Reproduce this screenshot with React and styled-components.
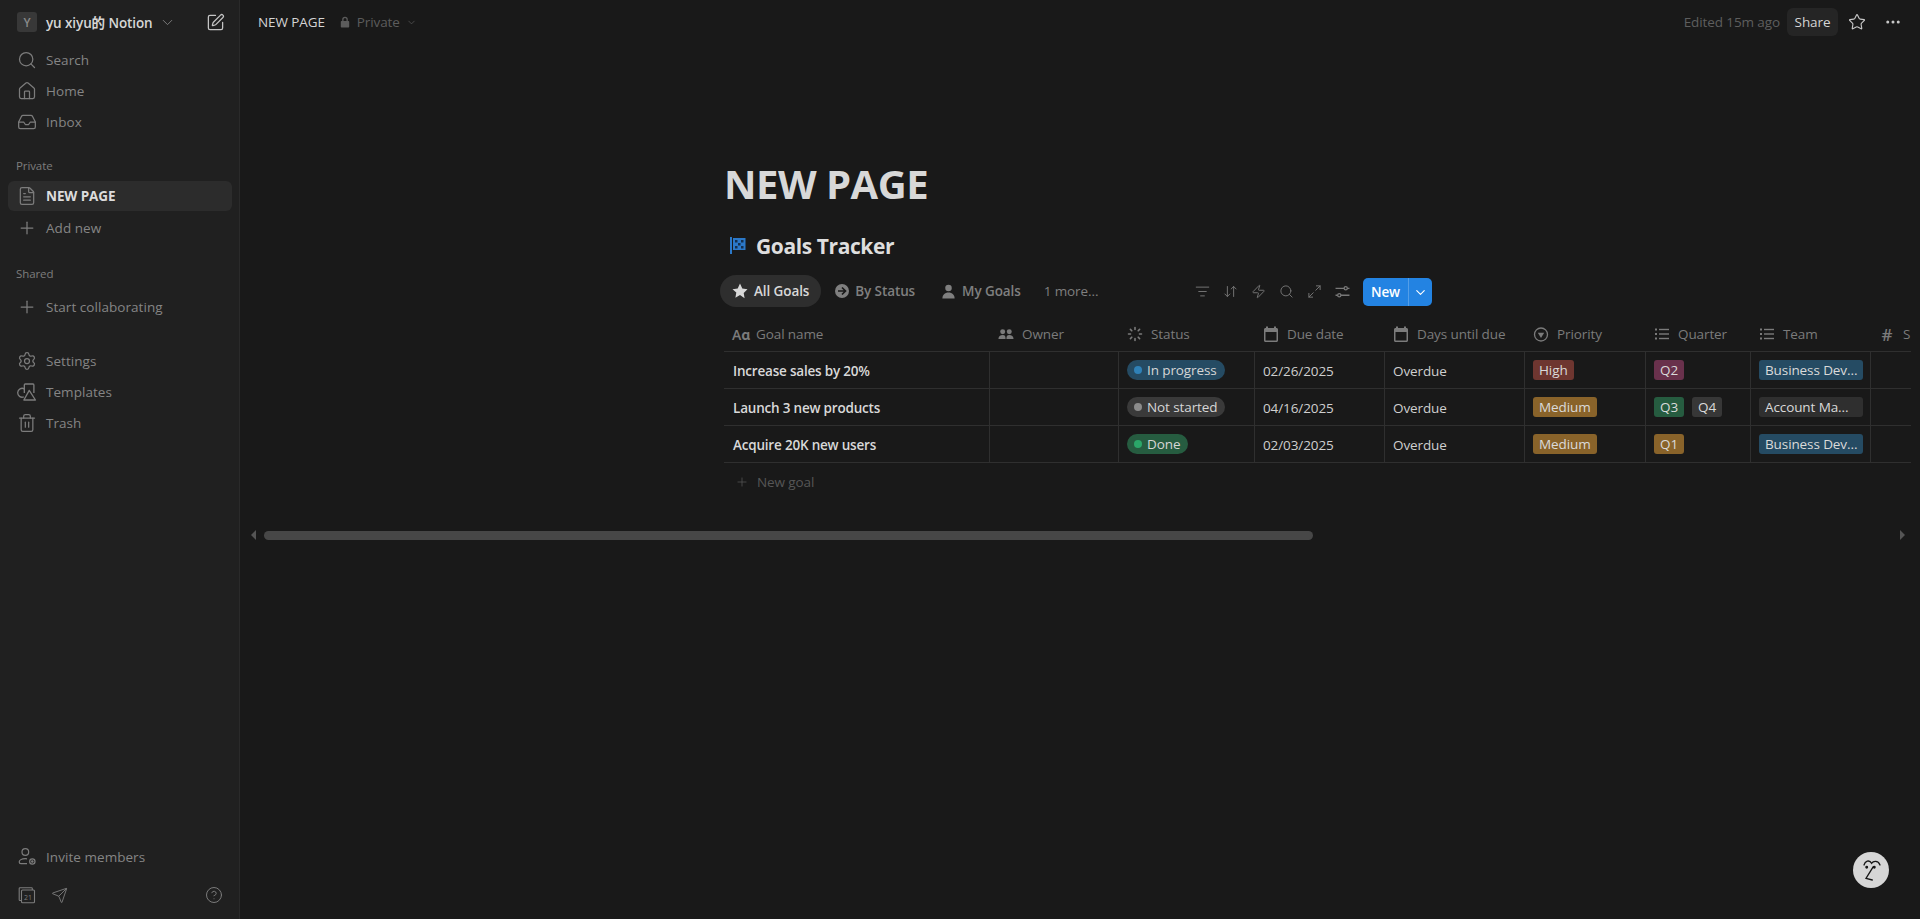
import React from 'react';
import styled, { createGlobalStyle } from 'styled-components';
import {
  Search, Home, Inbox, FileText, Plus, Settings, Trash2, SquarePen, ChevronDown,
  Star, CircleHelp, Send, ListFilter, ArrowDownUp, Zap, Maximize2, Ellipsis,
} from 'lucide-react';

const GlobalStyle = createGlobalStyle`
  html, body { margin: 0; height: 100%; background: #191919; }
  body {
    font-family: "Open Sans", "Noto Sans CJK SC", sans-serif;
    font-size: 13.5px;
    letter-spacing: -0.1px;
    overflow: hidden;
  }
`;

const Layout = styled.div`
  display: flex;
  height: 919px;
  position: relative;
`;

const Sidebar = styled.aside`
  width: 240px;
  flex: none;
  box-sizing: border-box;
  display: flex;
  flex-direction: column;
  padding: 0 7px 9px 8px;
  background: #202020;
  border-right: 1px solid #2a2a2a;
`;

const Workspace = styled.div`
  height: 44px;
  margin-bottom: 1px;
  padding: 0 8px 0 9px;
  display: flex;
  align-items: center;
  color: #d6d6d6;
  font-weight: 600;
`;

const Avatar = styled.span`
  width: 20px;
  height: 20px;
  margin-right: 9px;
  border-radius: 3px;
  background: #383838;
  color: #8a8a8a;
  font-size: 12px;
  display: flex;
  align-items: center;
  justify-content: center;
`;

const WorkspaceCaret = styled(ChevronDown)`
  margin-left: 6px;
  color: #7f7f7f;
`;

const ComposeIcon = styled(SquarePen)`
  margin-left: auto;
  margin-right: -1px;
  color: #c4c4c4;
`;

const NavRow = styled.div`
  height: 30px;
  flex: none;
  box-sizing: border-box;
  width: 224px;
  margin-bottom: ${({ $gap }) => $gap ?? 1}px;
  padding-left: 9px;
  display: flex;
  align-items: center;
  gap: 9px;
  border-radius: 6px;
  letter-spacing: ${({ $active }) => ($active ? '-0.1px' : '0.05px')};
  font-weight: ${({ $active }) => ($active ? 700 : 500)};
  color: ${({ $active }) => ($active ? '#dcdcdc' : '#858585')};
  background: ${({ $active }) => ($active ? '#2c2c2c' : 'transparent')};
  svg { flex: none; color: #7c7c7c; }
`;

const SectionLabel = styled.div`
  height: 20px;
  margin: ${({ $top }) => $top}px 0 ${({ $bottom }) => $bottom}px;
  padding-left: 8px;
  display: flex;
  align-items: center;
  font-size: 11.5px;
  font-weight: 500;
  color: #7d7d7d;
`;

const BottomGroup = styled.div`
  margin-top: 23px;
`;

const SidebarFooter = styled.div`
  margin-top: auto;
`;

const FooterIcons = styled.div`
  height: 30px;
  margin-top: 8px;
  padding: 0 10px;
  display: flex;
  align-items: center;
  gap: 15px;
  color: #7c7c7c;
`;

const HelpIcon = styled(CircleHelp)`
  margin-left: auto;
  margin-right: -1px;
`;

const Main = styled.main`
  flex: 1;
  min-width: 0;
  display: flex;
  flex-direction: column;
  background: #191919;
`;

const Topbar = styled.header`
  height: 44px;
  flex: none;
  padding: 0 18px;
  display: flex;
  align-items: center;
`;

const Crumb = styled.span`
  color: #d4d4d4;
  margin-right: 14px;
`;

const PrivacyTag = styled.span`
  display: flex;
  align-items: center;
  gap: 6px;
  color: #5c5c5c;
`;

const TopActions = styled.div`
  margin-left: auto;
  display: flex;
  align-items: center;
`;

const EditedText = styled.span`
  color: #5e5e5e;
  margin-right: 7px;
`;

const ShareButton = styled.button`
  width: 51px;
  height: 28px;
  padding: 0;
  border: 0;
  border-radius: 6px;
  background: #252525;
  color: #d4d4d4;
  font: inherit;
  letter-spacing: inherit;
`;

const StarButton = styled(Star)`
  margin: 0 18px 0 10px;
  color: #c8c8c8;
`;

const DotsIcon = styled(Ellipsis)`
  color: #c8c8c8;
`;

const Page = styled.section`
  padding: 116px 9px 0 484px;
`;

const Title = styled.h1`
  margin: 0 0 23px;
  font-size: 40px;
  line-height: 48px;
  font-weight: 700;
  letter-spacing: -0.5px;
  color: #d8d8d8;
`;

const DatabaseName = styled.div`
  height: 30px;
  padding-left: 6px;
  display: flex;
  align-items: center;
  gap: 10px;
  font-size: 21px;
  font-weight: 700;
  letter-spacing: -0.4px;
  color: #dedede;
`;

const ViewBar = styled.div`
  width: 712px;
  height: 32px;
  margin: 14px 0 0 -4px;
  display: flex;
  align-items: center;
`;

const ViewTab = styled.div`
  height: 32px;
  margin-right: 2px;
  padding: 0 12px;
  display: flex;
  align-items: center;
  gap: 6px;
  border-radius: 16px;
  font-weight: 600;
  color: ${({ $active }) => ($active ? '#d8d8d8' : '#7f7f7f')};
  background: ${({ $active }) => ($active ? '#2e2e2e' : 'transparent')};
`;

const MoreViews = styled.span`
  margin-left: 9px;
  color: #7f7f7f;
`;

const ToolIcons = styled.div`
  margin-left: auto;
  display: flex;
  align-items: center;
  gap: 13px;
  color: #787878;
`;

const NewSplit = styled.div`
  width: 69px;
  height: 28px;
  margin: 2px 0 0 13px;
  display: flex;
  border-radius: 5px;
  overflow: hidden;
  background: #2383e2;
  color: #fff;
  font-weight: 600;
`;

const NewLabel = styled.span`
  width: 45px;
  display: flex;
  align-items: center;
  justify-content: center;
  border-right: 1px solid rgba(255, 255, 255, 0.22);
`;

const NewCaret = styled.span`
  flex: 1;
  display: flex;
  align-items: center;
  justify-content: center;
`;

const TableClip = styled.div`
  margin-top: 10px;
  overflow: hidden;
`;

const columns = '266px 129px 136px 130px 140px 121px 105px 120px 200px';

const HeaderRow = styled.div`
  display: grid;
  grid-template-columns: ${columns};
  height: 35px;
  box-sizing: border-box;
  border-bottom: 1px solid #2f2f2f;
`;

const HeaderCell = styled.div`
  padding-left: 8px;
  display: flex;
  align-items: center;
  gap: 8px;
  color: #7b7b7b;
  svg { flex: none; }
`;

const TypeGlyph = styled.span`
  width: 16px;
  flex: none;
  font-size: ${({ $big }) => ($big ? 17 : 14)}px;
  font-weight: 600;
  text-align: center;
  color: #7b7b7b;
`;

const Row = styled.div`
  display: grid;
  grid-template-columns: ${columns};
  height: 37px;
  box-sizing: border-box;
  border-bottom: 1px solid #2f2f2f;
`;

const Cell = styled.div`
  padding: 2px 0 0 8px;
  display: flex;
  align-items: center;
  gap: 8px;
  box-sizing: border-box;
  color: #cfcfcf;
  border-right: ${({ $last }) => ($last ? 0 : '1px solid #2f2f2f')};
`;

const GoalName = styled.span`
  padding-left: 1px;
  font-weight: 600;
  letter-spacing: -0.2px;
  color: #d8d8d8;
`;

const StatusPill = styled.span`
  height: 20px;
  margin-top: -2px;
  padding: 0 8px 0 7px;
  display: flex;
  align-items: center;
  gap: 5px;
  border-radius: 10px;
  color: #d6d6d6;
  background: ${({ $bg }) => $bg};
`;

const StatusDot = styled.i`
  width: 8px;
  height: 8px;
  border-radius: 50%;
  background: ${({ $color }) => $color};
`;

const Tag = styled.span`
  height: 20px;
  margin-top: -2px;
  box-sizing: border-box;
  width: ${({ $width }) => ($width ? `${$width}px` : 'auto')};
  padding: 0 6px;
  display: flex;
  align-items: center;
  white-space: nowrap;
  border-radius: 3px;
  color: #dadada;
  background: ${({ $bg }) => $bg};
`;

const NewRow = styled.div`
  height: 37px;
  padding-left: 11px;
  display: flex;
  align-items: center;
  gap: 8px;
  color: #565656;
`;

const ScrollRow = styled.div`
  height: 10px;
  margin-top: 30px;
  padding: 0 15px 0 11px;
  display: flex;
  align-items: center;
`;

const ScrollThumb = styled.div`
  width: 1049px;
  height: 9px;
  margin-left: 8px;
  border-radius: 5px;
  background: #474747;
`;

const Arrow = styled.i`
  width: 0;
  height: 0;
  border: 5px solid transparent;
  border-left-width: ${({ $right }) => ($right ? 5 : 0)}px;
  border-right-width: ${({ $right }) => ($right ? 0 : 5)}px;
  border-left-color: ${({ $right }) => ($right ? '#555' : 'transparent')};
  border-right-color: ${({ $right }) => ($right ? 'transparent' : '#555')};
  margin-left: ${({ $right }) => ($right ? 'auto' : 0)};
`;

const HelpBubble = styled.div`
  position: absolute;
  right: 31px;
  bottom: 31px;
  width: 36px;
  height: 36px;
  border-radius: 50%;
  background: #d6d6d6;
  display: flex;
  align-items: center;
  justify-content: center;
`;

const FilledIcon = ({ size = 16, children, box = 16 }) => (
  <svg width={size} height={size} viewBox={`0 0 ${box} ${box}`} fill="currentColor">{children}</svg>
);

const LockIcon = () => (
  <FilledIcon size={12} box={12}>
    <path d="M3.2 5V3.6a2.8 2.8 0 0 1 5.6 0V5h.4c.6 0 1 .4 1 1v4.4c0 .6-.4 1-1 1H2.8c-.6 0-1-.4-1-1V6c0-.6.4-1 1-1h.4zm1.3 0h3V3.6a1.5 1.5 0 0 0-3 0V5z" />
  </FilledIcon>
);

const TemplatesIcon = () => (
  <svg width="20" height="20" viewBox="0 0 18 18" fill="none" stroke="currentColor" strokeWidth="1.2" strokeLinejoin="round">
    <path d="M6.6 6.2a4 4 0 1 0-.5 7.2" />
    <path d="M6.6 9.8V2.6c0-.5.3-.8.8-.8h7c.5 0 .8.3.8.8v7.2" />
    <path d="M11 7.6l5.6 8.6H6.2L11 7.6z" />
  </svg>
);

const InviteIcon = () => (
  <svg width="20" height="20" viewBox="0 0 18 18" fill="none" stroke="currentColor" strokeWidth="1.1">
    <circle cx="7.5" cy="4.5" r="3" />
    <path d="M9 10.6c-.5-.1-1-.1-1.500-.1-3.500 0-5.500 1.400-5.500 3 0 .9.600 1.500 1.500 1.500H9" />
    <circle cx="13.800" cy="13" r="2.400" />
    <circle cx="13.800" cy="13" r=".6" fill="currentColor" />
  </svg>
);

const CalendarAppIcon = () => (
  <svg width="18" height="18" viewBox="0 0 18 18" fill="none" stroke="currentColor" strokeWidth="1.1">
    <path d="M3.500 14.500H2c-.5 0-.8-.3-.8-.8V2.500c0-.5.3-.8.8-.8h11.500c.5 0 .8.3.8.8V4" />
    <rect x="3.500" y="4" width="13" height="12.800" rx="1" />
    <text x="10" y="14" fontSize="7" textAnchor="middle" fill="currentColor" stroke="none">21</text>
  </svg>
);

const FlagIcon = () => (
  <svg width="16" height="18" viewBox="0 0 16 18">
    <rect x="0" y="0" width="2" height="17" fill="#2b78c8" />
    <rect x="3" y="1" width="12.500" height="12" fill="#2b78c8" />
    <g fill="#142f4e">
      <rect x="5" y="3" width="2.500" height="2.500" />
      <rect x="11" y="3" width="2.500" height="2.500" />
      <rect x="8" y="6" width="2.500" height="2.500" />
      <rect x="5" y="9" width="2.500" height="2.500" />
      <rect x="11" y="9" width="2.500" height="2.500" />
    </g>
  </svg>
);

const StarFilled = () => (
  <FilledIcon>
    <path d="M8 .6l2.300 4.900 5.200.7-3.800 3.700.9 5.300L8 12.100l-4.600 2.600.9-5.300L.5 6.200l5.200-.7z" />
  </FilledIcon>
);

const CircleArrow = () => (
  <svg width="14" height="14" viewBox="0 0 14 14">
    <circle cx="7" cy="7" r="7" fill="currentColor" />
    <path d="M3 7h7M7 3.500L10.500 7 7 10.500" fill="none" stroke="#191919" strokeWidth="1.700" />
  </svg>
);

const PersonIcon = () => (
  <FilledIcon size={15}>
    <circle cx="8" cy="4.200" r="3.500" />
    <path d="M1.500 15.500c0-4 2.500-6.500 6.500-6.500s6.500 2.500 6.500 6.500z" />
  </FilledIcon>
);

const PeopleIcon = () => (
  <svg width="16" height="13" viewBox="0 0 18 14" fill="currentColor">
    <circle cx="5.300" cy="4" r="2.800" />
    <circle cx="12.700" cy="4" r="2.800" />
    <path d="M.5 12c0-3 2-4.500 4.800-4.500S8.500 9 8.500 12zM9.500 12c0-3 .5-4.500 3.200-4.500S17.500 9 17.500 12z" />
  </svg>
);

const SpinnerIcon = () => (
  <svg width="16" height="16" viewBox="0 0 16 16" stroke="currentColor" strokeWidth="1.600" strokeLinecap="round">
    <path d="M8 1.500v2M8 12.500v2M1.500 8h2M12.500 8h2M3.400 3.400l1.400 1.400M11.200 11.200l1.400 1.400M3.400 12.600l1.400-1.400M11.200 4.800l1.400-1.400" />
  </svg>
);

const DateIcon = () => (
  <FilledIcon>
    <path d="M3 .5h2V2h6V.5h2V2h.5c.8 0 1.500.7 1.500 1.500v11c0 .8-.7 1.500-1.500 1.500h-11C1.700 16 1 15.300 1 14.500v-11C1 2.700 1.700 2 2.500 2H3zM2.500 6v8.500h11V6z" />
  </FilledIcon>
);

const PriorityIcon = () => (
  <svg width="16" height="15" viewBox="0 0 15 15">
    <circle cx="7.500" cy="7.500" r="6.500" fill="none" stroke="currentColor" strokeWidth="1.300" />
    <path d="M4.300 5.800h6.400L7.500 11z" fill="currentColor" />
  </svg>
);

const ListIcon = () => (
  <svg width="16" height="16" viewBox="0 0 16 16" fill="currentColor">
    <rect x="1" y="2.500" width="2" height="2" />
    <rect x="1" y="7" width="2" height="2" />
    <rect x="1" y="11.500" width="2" height="2" />
    <rect x="5" y="2.800" width="10" height="1.400" />
    <rect x="5" y="7.300" width="10" height="1.400" />
    <rect x="5" y="11.800" width="10" height="1.400" />
  </svg>
);

const SlidersIcon = () => (
  <svg width="15" height="15" viewBox="0 0 14 14" fill="none" stroke="currentColor" strokeWidth="1.200">
    <path d="M.5 4h8M11.500 4h2M.5 10.500h2M5.500 10.500h8" />
    <circle cx="10" cy="4" r="1.500" />
    <circle cx="4" cy="10.500" r="1.500" />
  </svg>
);

const AssistantFace = () => (
  <svg width="24" height="24" viewBox="0 0 24 24" fill="none" stroke="#161616" strokeWidth="1.300" strokeLinecap="round">
    <path d="M5 7c1-3.500 5-6 7.700-1.700C14 3 19 2 21 7" />
    <path d="M14.300 8.700L7 20.300l6.300 1.700" />
    <circle cx="7.700" cy="9.300" r=".8" fill="#161616" />
    <circle cx="15.300" cy="9.300" r=".8" fill="#161616" />
  </svg>
);

const iconProps = { size: 20, strokeWidth: 1.500 };
const toolProps = { size: 15, strokeWidth: 1.500 };

const headers = [
  { label: 'Goal name', icon: <TypeGlyph>Aɑ</TypeGlyph> },
  { label: 'Owner', icon: <PeopleIcon /> },
  { label: 'Status', icon: <SpinnerIcon /> },
  { label: 'Due date', icon: <DateIcon /> },
  { label: 'Days until due', icon: <DateIcon /> },
  { label: 'Priority', icon: <PriorityIcon /> },
  { label: 'Quarter', icon: <ListIcon /> },
  { label: 'Team', icon: <ListIcon /> },
  { label: 'S', icon: <TypeGlyph $big>#</TypeGlyph> },
];

const blue = '#254b63';
const green = '#265c40';
const amber = '#89632a';

const goals = [
  {
    name: 'Increase sales by 20%',
    status: { label: 'In progress', bg: blue, dot: '#2f81b7' },
    due: '02/26/2025',
    priority: { label: 'High', bg: '#6e3630' },
    quarters: [{ label: 'Q2', bg: '#69314c' }],
    team: { label: 'Business Dev...', bg: blue },
  },
  {
    name: 'Launch 3 new products',
    status: { label: 'Not started', bg: '#3a3a3a', dot: '#8c8c8c' },
    due: '04/16/2025',
    priority: { label: 'Medium', bg: amber },
    quarters: [{ label: 'Q3', bg: green }, { label: 'Q4', bg: '#373737' }],
    team: { label: 'Account Ma...', bg: '#2f2f2f' },
  },
  {
    name: 'Acquire 20K new users',
    status: { label: 'Done', bg: green, dot: '#2ba769' },
    due: '02/03/2025',
    priority: { label: 'Medium', bg: amber },
    quarters: [{ label: 'Q1', bg: amber }],
    team: { label: 'Business Dev...', bg: blue },
  },
];

const App = () => (
  <Layout>
    <GlobalStyle />
    <Sidebar>
      <Workspace>
        <Avatar>Y</Avatar>
        yu xiyu的 Notion
        <WorkspaceCaret size={17} strokeWidth={1.300} />
        <ComposeIcon size={19} strokeWidth={1.600} />
      </Workspace>
      <NavRow><Search {...iconProps} />Search</NavRow>
      <NavRow><Home {...iconProps} />Home</NavRow>
      <NavRow><Inbox {...iconProps} />Inbox</NavRow>
      <SectionLabel $top={17} $bottom={6}>Private</SectionLabel>
      <NavRow $active $gap={2}><FileText {...iconProps} />NEW PAGE</NavRow>
      <NavRow><Plus {...iconProps} />Add new</NavRow>
      <SectionLabel $top={19} $bottom={9}>Shared</SectionLabel>
      <NavRow><Plus {...iconProps} />Start collaborating</NavRow>
      <BottomGroup>
        <NavRow><Settings {...iconProps} />Settings</NavRow>
        <NavRow><TemplatesIcon />Templates</NavRow>
        <NavRow><Trash2 {...iconProps} />Trash</NavRow>
      </BottomGroup>
      <SidebarFooter>
        <NavRow><InviteIcon />Invite members</NavRow>
        <FooterIcons>
          <CalendarAppIcon />
          <Send size={17} strokeWidth={1.300} />
          <HelpIcon size={18} strokeWidth={1.300} />
        </FooterIcons>
      </SidebarFooter>
    </Sidebar>
    <Main>
      <Topbar>
        <Crumb>NEW PAGE</Crumb>
        <PrivacyTag>
          <LockIcon />
          Private
          <ChevronDown size={11} strokeWidth={1.500} />
        </PrivacyTag>
        <TopActions>
          <EditedText>Edited 15m ago</EditedText>
          <ShareButton>Share</ShareButton>
          <StarButton size={18} strokeWidth={1.500} />
          <DotsIcon size={18} strokeWidth={2} />
        </TopActions>
      </Topbar>
      <Page>
        <Title>NEW PAGE</Title>
        <DatabaseName><FlagIcon />Goals Tracker</DatabaseName>
        <ViewBar>
          <ViewTab $active><StarFilled />All Goals</ViewTab>
          <ViewTab><CircleArrow />By Status</ViewTab>
          <ViewTab><PersonIcon />My Goals</ViewTab>
          <MoreViews>1 more...</MoreViews>
          <ToolIcons>
            <ListFilter {...toolProps} />
            <ArrowDownUp {...toolProps} />
            <Zap {...toolProps} />
            <Search {...toolProps} />
            <Maximize2 {...toolProps} />
            <SlidersIcon />
          </ToolIcons>
          <NewSplit>
            <NewLabel>New</NewLabel>
            <NewCaret><ChevronDown size={15} strokeWidth={1.800} /></NewCaret>
          </NewSplit>
        </ViewBar>
        <TableClip>
          <HeaderRow>
            {headers.map((h) => (
              <HeaderCell key={h.label}>{h.icon}{h.label}</HeaderCell>
            ))}
          </HeaderRow>
          {goals.map((g) => (
            <Row key={g.name}>
              <Cell><GoalName>{g.name}</GoalName></Cell>
              <Cell />
              <Cell>
                <StatusPill $bg={g.status.bg}>
                  <StatusDot $color={g.status.dot} />
                  {g.status.label}
                </StatusPill>
              </Cell>
              <Cell>{g.due}</Cell>
              <Cell>Overdue</Cell>
              <Cell><Tag $bg={g.priority.bg}>{g.priority.label}</Tag></Cell>
              <Cell>
                {g.quarters.map((q) => <Tag key={q.label} $bg={q.bg}>{q.label}</Tag>)}
              </Cell>
              <Cell><Tag $bg={g.team.bg} $width={104}>{g.team.label}</Tag></Cell>
              <Cell $last />
            </Row>
          ))}
          <NewRow><Plus size={14} strokeWidth={1.300} />New goal</NewRow>
        </TableClip>
      </Page>
      <ScrollRow>
        <Arrow />
        <ScrollThumb />
        <Arrow $right />
      </ScrollRow>
    </Main>
    <HelpBubble><AssistantFace /></HelpBubble>
  </Layout>
);

export default App;
